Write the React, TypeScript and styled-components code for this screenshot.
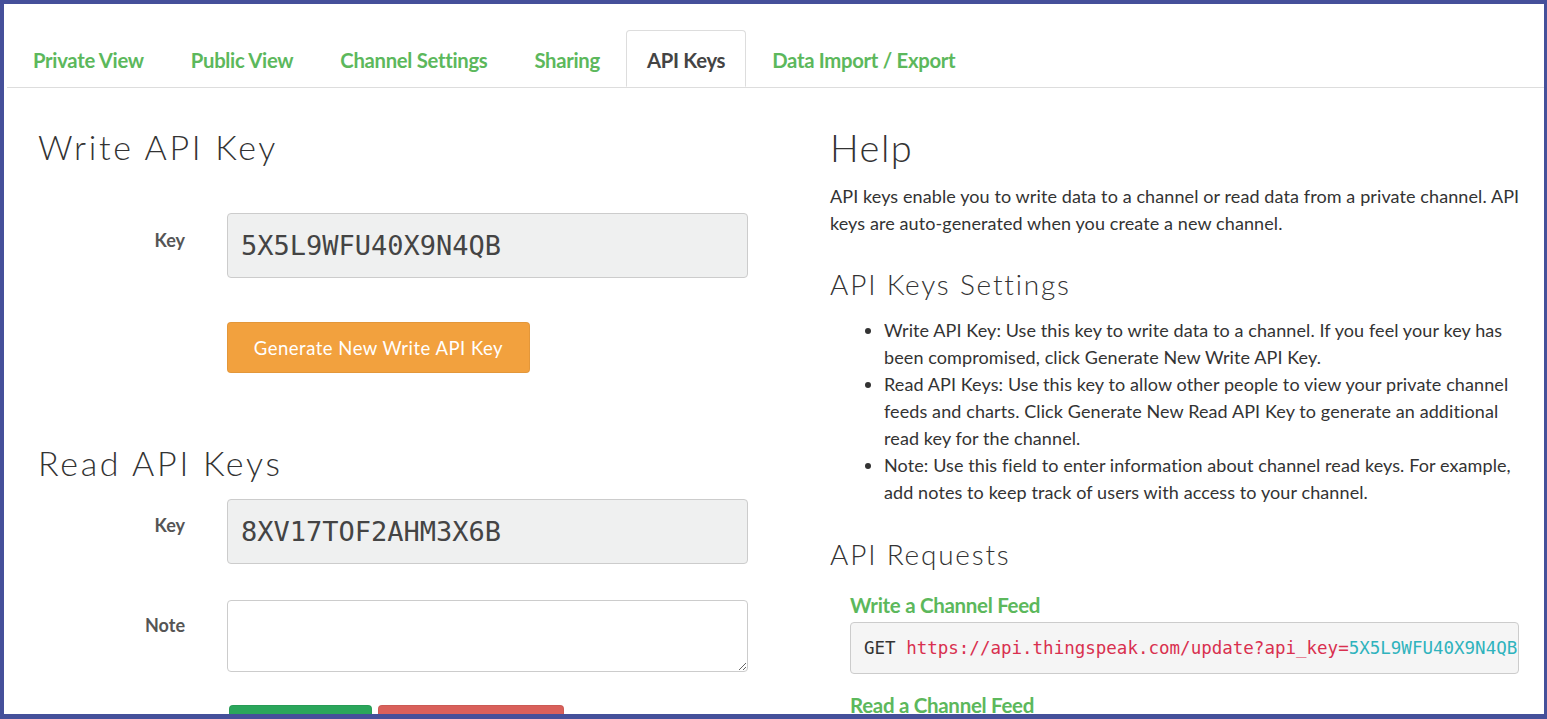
import React from "react";
import styled, { createGlobalStyle } from "styled-components";

const GlobalStyle = createGlobalStyle`
  html, body {
    margin: 0;
    padding: 0;
    background: #ffffff;
  }
  body {
    font-family: "Lato", "Liberation Sans", sans-serif;
    color: #333333;
  }
  * {
    box-sizing: border-box;
  }
`;

const Frame = styled.div`
  width: 1547px;
  height: 719px;
  border: 4px solid #45509a;
  border-right-width: 3px;
  border-bottom-width: 5px;
  background: #ffffff;
  overflow: hidden;
`;

const TabBar = styled.nav`
  display: flex;
  margin: 26px 0 0 3px;
  padding-left: 5px;
  border-bottom: 1px solid #dddddd;
`;

const Tab = styled.a<{ $active?: boolean }>`
  display: flex;
  align-items: center;
  height: 57px;
  padding: 3px 20px 0;
  margin-right: 5px;
  margin-bottom: ${(p) => (p.$active ? "-1px" : "0")};
  font-size: 20.3px;
  font-weight: 700;
  letter-spacing: -0.3px;
  color: ${(p) => (p.$active ? "#444444" : "#5cb85c")};
  background: ${(p) => (p.$active ? "#ffffff" : "transparent")};
  border: 1px solid ${(p) => (p.$active ? "#dddddd" : "transparent")};
  border-bottom-color: transparent;
  border-radius: 4px 4px 0 0;
  text-decoration: none;
  cursor: pointer;
`;

const Content = styled.main`
  display: grid;
  grid-template-columns: 710px 695px;
  column-gap: 82px;
  padding-left: 34px;
`;

const Column = styled.section`
  display: flex;
  flex-direction: column;
`;

const Heading = styled.h2<{ $top: number; $size?: number }>`
  margin: ${(p) => p.$top}px 0 0;
  font-size: ${(p) => p.$size ?? 34}px;
  line-height: 38px;
  font-weight: 300;
  letter-spacing: ${(p) => (p.$size ? 1.5 : 2.7)}px;
  color: #333333;
`;

const SubHeading = styled.h3<{ $top: number }>`
  margin: ${(p) => p.$top}px 0 0;
  font-size: 28px;
  line-height: 32px;
  font-weight: 300;
  letter-spacing: 1.8px;
  color: #333333;
`;

const FormRow = styled.div<{ $top: number }>`
  display: grid;
  grid-template-columns: 147px 521px;
  column-gap: 42px;
  margin-top: ${(p) => p.$top}px;
`;

const Label = styled.label<{ $pad: number }>`
  padding-top: ${(p) => p.$pad}px;
  text-align: right;
  font-size: 18px;
  line-height: 26px;
  font-weight: 700;
  color: #555555;
`;

const KeyField = styled.div`
  display: flex;
  align-items: center;
  height: 65px;
  padding-left: 13px;
  background: #eff0f0;
  border: 1px solid #cccccc;
  border-radius: 4px;
  font-family: "DejaVu Sans Mono", "Liberation Mono", monospace;
  font-size: 27px;
  color: #444444;
`;

const NoteArea = styled.textarea`
  display: block;
  width: 521px;
  height: 72px;
  padding: 8px 12px;
  border: 1px solid #cccccc;
  border-radius: 4px;
  font-family: "Lato", sans-serif;
  font-size: 17px;
`;

const ButtonRow = styled.div<{ $top: number; $left: number }>`
  display: flex;
  gap: 6px;
  margin: ${(p) => p.$top}px 0 0 ${(p) => p.$left}px;
`;

const Button = styled.button<{ $color: string; $width: number }>`
  width: ${(p) => p.$width}px;
  height: 51px;
  padding: 0;
  background: ${(p) => p.$color};
  border: 1px solid rgba(0, 0, 0, 0.06);
  border-radius: 4px;
  color: #ffffff;
  font-family: "Lato", sans-serif;
  font-size: 18.5px;
  font-weight: 400;
  letter-spacing: 0.5px;
  cursor: pointer;
`;

const Paragraph = styled.p`
  margin: 17px 0 0;
  font-size: 18px;
  line-height: 27px;
  letter-spacing: 0.1px;
  color: #333333;
`;

const HelpList = styled.ul`
  margin: 17px 0 0;
  padding-left: 54px;
  font-size: 18px;
  line-height: 27px;
  letter-spacing: 0.1px;
  color: #333333;
`;

const Request = styled.div`
  display: flex;
  flex-direction: column;
  padding-left: 20px;
`;

const RequestTitle = styled.h4<{ $top: number }>`
  margin: ${(p) => p.$top}px 0 0;
  font-size: 20.5px;
  line-height: 24px;
  font-weight: 700;
  letter-spacing: -0.3px;
  color: #5cb85c;
`;

const CodeBox = styled.pre`
  margin: 5px 0 0;
  width: 669px;
  height: 52px;
  padding: 0 0 0 13px;
  background: #f5f5f5;
  border: 1px solid #cccccc;
  border-radius: 4px;
  overflow: hidden;
  white-space: pre;
  font-family: "DejaVu Sans Mono", "Liberation Mono", monospace;
  font-size: 17.5px;
  line-height: 50px;
  color: #333333;
`;

const Url = styled.span`
  color: #d9304f;
`;

const KeyPart = styled.span`
  color: #2fb3bd;
`;

const tabs = [
  "Private View",
  "Public View",
  "Channel Settings",
  "Sharing",
  "API Keys",
  "Data Import / Export",
];

export default function App(): JSX.Element {
  return (
    <>
      <GlobalStyle />
      <Frame>
        <TabBar>
          {tabs.map((t) => (
            <Tab key={t} $active={t === "API Keys"}>
              {t}
            </Tab>
          ))}
        </TabBar>
        <Content>
          <Column>
            <Heading $top={40}>Write API Key</Heading>
            <FormRow $top={47}>
              <Label $pad={14}>Key</Label>
              <KeyField>5X5L9WFU40X9N4QB</KeyField>
            </FormRow>
            <ButtonRow $top={44} $left={189}>
              <Button $color="#f2a13e" $width={303}>
                Generate New Write API Key
              </Button>
            </ButtonRow>
            <Heading $top={71}>Read API Keys</Heading>
            <FormRow $top={17}>
              <Label $pad={13}>Key</Label>
              <KeyField>8XV17TOF2AHM3X6B</KeyField>
            </FormRow>
            <FormRow $top={36}>
              <Label $pad={12}>Note</Label>
              <NoteArea />
            </FormRow>
            <ButtonRow $top={33} $left={191}>
              <Button $color="#2aa65b" $width={143}>
                Save Note
              </Button>
              <Button $color="#d9605a" $width={186}>
                Delete API Key
              </Button>
            </ButtonRow>
          </Column>
          <Column>
            <Heading $top={40} $size={38}>
              Help
            </Heading>
            <Paragraph>
              API keys enable you to write data to a channel or read data from a
              private channel. API keys are auto-generated when you create a new
              channel.
            </Paragraph>
            <SubHeading $top={31}>API Keys Settings</SubHeading>
            <HelpList>
              <li>
                Write API Key: Use this key to write data to a channel. If you
                feel your key has been compromised, click Generate New Write API
                Key.
              </li>
              <li>
                Read API Keys: Use this key to allow other people to view your
                private channel feeds and charts. Click Generate New Read API Key
                to generate an additional read key for the channel.
              </li>
              <li>
                Note: Use this field to enter information about channel read
                keys. For example, add notes to keep track of users with access
                to your channel.
              </li>
            </HelpList>
            <SubHeading $top={32}>API Requests</SubHeading>
            <Request>
              <RequestTitle $top={23}>Write a Channel Feed</RequestTitle>
              <CodeBox>
                {"GET "}
                <Url>https://api.thingspeak.com/update?api_key=</Url>
                <KeyPart>5X5L9WFU40X9N4QB</KeyPart>
              </CodeBox>
              <RequestTitle $top={19}>Read a Channel Feed</RequestTitle>
            </Request>
          </Column>
        </Content>
      </Frame>
    </>
  );
}
